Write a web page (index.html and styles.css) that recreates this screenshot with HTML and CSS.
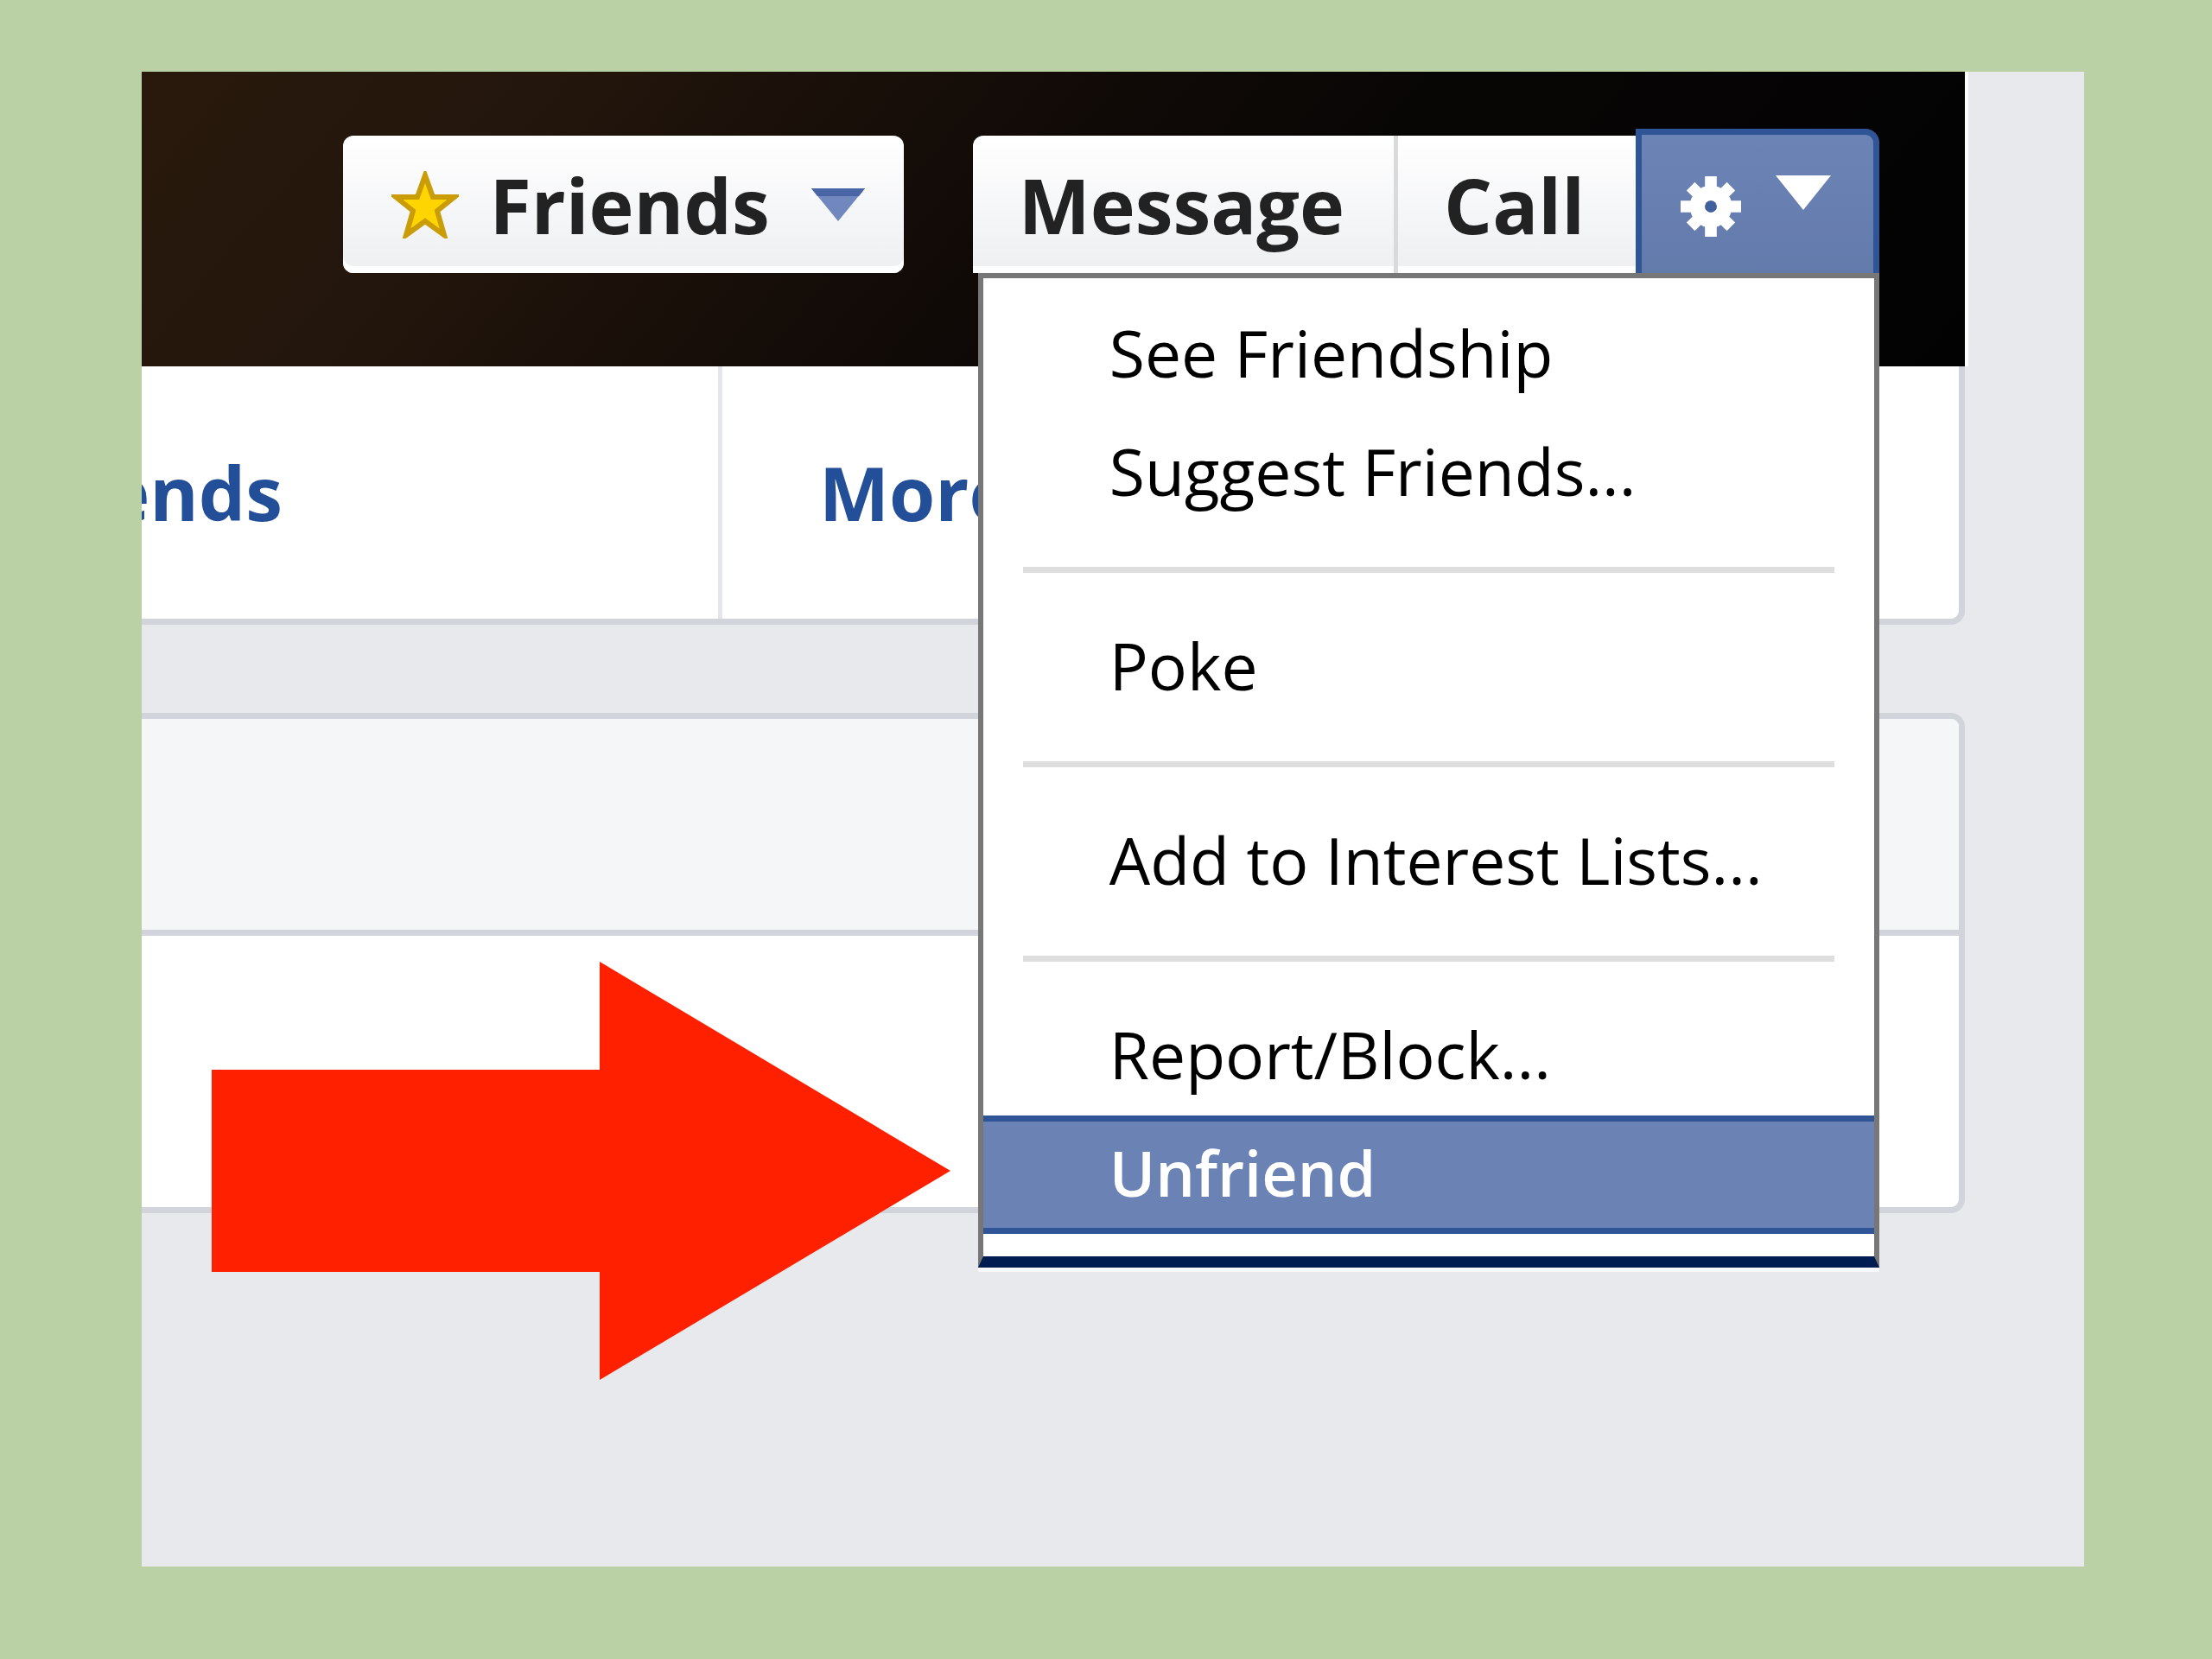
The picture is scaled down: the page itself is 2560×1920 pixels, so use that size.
FILE: index.html
```html
<!DOCTYPE html>
<html lang="en">
  <head>
    <meta charset="UTF-8" />
    <meta name="viewport" content="width=device-width, initial-scale=1.0" />
    <title>Profile</title>
    <link rel="stylesheet" href="styles.css">
  </head>
  <body>
    <main class="shot">
      <div class="profile">
        <header class="cover">
          <button class="btn btn-single" type="button">
            <svg class="star" viewBox="0 0 78 78" aria-hidden="true">
              <polygon points="39,5 48,30 73,30 53,46 61,74 39,58 17,74 25,46 5,30 30,30" fill="#ffd500" stroke="#c99c08" stroke-width="6" />
            </svg>
            <span>Friends</span>
            <svg class="caret" viewBox="0 0 64 40" aria-hidden="true">
              <polygon points="1,1 63,1 32,39" fill="#7088bd" />
              <polygon points="1,1 63,1 56,10 8,10" fill="#4a65a5" />
            </svg>
          </button>

          <div class="btn-group">
            <button class="btn btn-first" type="button">Message</button>
            <button class="btn btn-call" type="button">Call</button>
            <button class="btn btn-gear" type="button" aria-label="Settings" aria-expanded="true">
              <svg class="gear" viewBox="0 0 72 72" aria-hidden="true">
                <g stroke="#fff" stroke-width="14">
                  <path d="M36 0V24M36 48V72M0 36H24M48 36H72" />
                  <path d="M12 12L27 27M45 45L60 60M60 12L45 27M27 45L12 60" />
                </g>
                <circle cx="36" cy="36" r="16" fill="none" stroke="#fff" stroke-width="18" />
                <circle cx="36" cy="36" r="7" fill="#3f5f9f" />
              </svg>
              <svg class="caret caret-up" viewBox="0 0 64 40" aria-hidden="true">
                <polygon points="0,0 64,0 32,40" fill="#fff" />
              </svg>
            </button>

            <ul class="menu">
              <li><a href="#">See Friendship</a></li>
              <li><a href="#">Suggest Friends...</a></li>
              <li class="separator"></li>
              <li><a href="#">Poke</a></li>
              <li class="separator"></li>
              <li><a href="#">Add to Interest Lists...</a></li>
              <li class="separator"></li>
              <li><a href="#">Report/Block...</a></li>
              <li class="selected">
                <a href="#">Unfriend</a>
                <svg class="arrow" viewBox="0 0 855 484" aria-hidden="true">
                  <polygon points="0,125 449,125 449,0 855,242 449,484 449,359 0,359" fill="#ff2000" />
                </svg>
              </li>
            </ul>
          </div>
        </header>

        <nav class="tabs">
          <a class="tab tab-friends" href="#">Friends</a>
          <a class="tab tab-more" href="#">More</a>
        </nav>

        <section class="panel">
          <div class="panel-header"></div>
          <div class="panel-body"></div>
        </section>
      </div>
    </main>
  </body>
</html>
```
FILE: styles.css
```css
:root {
  --frame-color: #b9d1a5;
  --page-color: #e8e9ed;
  --line-color: #d1d4da;
  --blue: #6b82b5;
  --blue-dark: #2f5597;
  --link-color: #234f99;
}

* {
  margin: 0;
  padding: 0;
  box-sizing: border-box;
}

body {
  display: flex;
  min-height: 100vh;
  padding: 83px 148px 107px 164px;
  background-color: var(--frame-color);
  font-family: "Open Sans", "Noto Sans", sans-serif;
}

.shot {
  flex: 1;
  overflow: hidden;
  background-color: var(--page-color);
}

/* the profile column starts left of the visible area */
.profile {
  margin-left: -164px;
  margin-right: 138px;
}

.cover {
  display: flex;
  justify-content: flex-end;
  gap: 80px;
  padding: 74px 99px 108px 0;
  background: linear-gradient(130deg, #2a1a0b 0%, #23160c 25%, #120b07 48%, #080605 65%, #020202 100%);
  box-shadow: 4px 0 0 #fff;
}

.btn {
  display: flex;
  align-items: center;
  height: 159px;
  border: 0;
  background: linear-gradient(#fff, #edeff1);
  box-shadow: inset 0 -8px 0 #fff;
  color: #222;
  font-family: inherit;
  font-size: 88px;
  font-weight: 700;
  line-height: 120px;
  cursor: pointer;
}

.btn-single {
  gap: 35px;
  padding: 0 44px 0 56px;
  border-radius: 12px;
}

.btn-single .caret {
  margin-left: 12px;
}

.star {
  width: 78px;
  height: 78px;
}

.caret {
  width: 64px;
  height: 40px;
}

.btn-group {
  position: relative;
  display: flex;
  align-items: flex-end;
}

.btn-first {
  padding: 0 57px 0 53px;
  border-right: 5px solid #d8dadc;
  border-radius: 12px 0 0 0;
}

.btn-call {
  padding: 0 59px 0 53px;
}

.btn-gear {
  gap: 40px;
  height: 167px;
  margin-top: -8px;
  padding: 6px 49px 0 45px;
  border: 7px solid var(--blue-dark);
  border-bottom: 0;
  border-radius: 0 16px 0 0;
  background: linear-gradient(#6c83b6, #637bab);
  box-shadow: none;
}

.gear {
  width: 70px;
  height: 70px;
}

.caret-up {
  margin-bottom: 32px;
}

.menu {
  position: absolute;
  top: 100%;
  left: 6px;
  right: 0;
  z-index: 1;
  padding: 20px 0 26px;
  border: solid #777;
  border-width: 6px 6px 13px;
  border-bottom-color: #001c50;
  background-color: #fff;
  box-shadow: 0 5px 0 #f8f8fa;
  list-style: none;
}

.menu a {
  display: block;
  padding: 0 40px 4px 146px;
  border: solid transparent;
  border-width: 7px 0;
  color: #000;
  font-size: 75px;
  line-height: 119px;
  text-decoration: none;
  white-space: nowrap;
}

.separator {
  height: 7px;
  margin: 40px 46px 41px;
  background-color: #dedede;
}

.selected {
  position: relative;
}

.menu .selected a {
  border-color: var(--blue-dark);
  background-color: var(--blue);
  color: #fff;
  font-size: 72px;
  font-weight: 600;
}

.arrow {
  position: absolute;
  top: 64px;
  right: calc(100% + 38px);
  width: 855px;
  height: 484px;
  transform: translateY(-50%);
}

.tabs {
  display: flex;
  border: solid var(--line-color);
  border-width: 0 7px 7px 0;
  border-radius: 0 0 16px 0;
  background-color: #fff;
}

.tab {
  color: var(--link-color);
  font-size: 86px;
  font-weight: 700;
  line-height: 292px;
  text-decoration: none;
}

.tab-friends {
  width: 836px;
  padding-left: 10px;
  border-right: 5px solid #e5e6eb;
}

.tab-more {
  padding-left: 112px;
}

.panel {
  margin-top: 102px;
  border: 7px solid var(--line-color);
  border-radius: 0 16px 16px 0;
  background-color: #fff;
}

.panel-header {
  height: 251px;
  border-bottom: 7px solid var(--line-color);
  border-radius: 0 9px 0 0;
  background-color: #f5f6f8;
}

.panel-body {
  height: 314px;
}
```
